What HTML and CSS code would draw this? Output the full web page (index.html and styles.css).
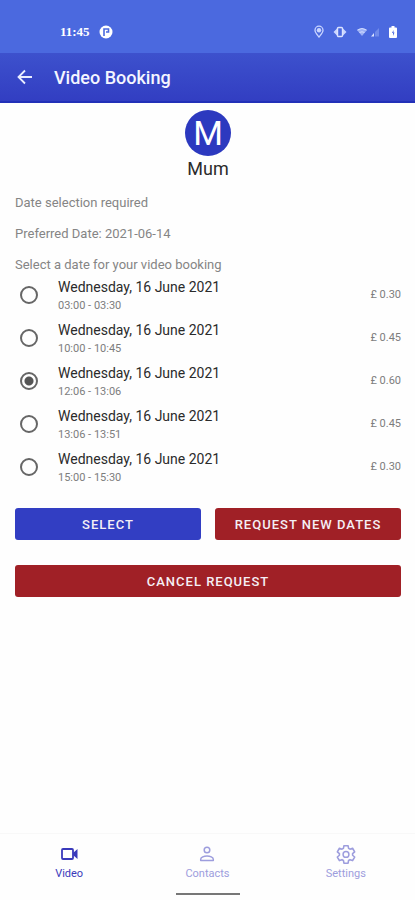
FILE: index.html
```html
<!DOCTYPE html>
<html lang="en">
<head>
<meta charset="utf-8">
<meta name="viewport" content="width=device-width, initial-scale=1">
<title>Video Booking</title>
<link rel="stylesheet" href="styles.css">
</head>
<body>
<div class="status">
  <div class="status-group">
    <span class="clock">11:45</span>
    <svg width="14" height="14" viewBox="0 0 14 14" aria-hidden="true"><circle cx="7" cy="7" r="6.5" fill="#fff"/><path d="M5 11V4H9.5V7H7" fill="none" stroke="#4b69df" stroke-width="1.6"/></svg>
  </div>
  <div class="status-group status-icons">
    <svg width="10" height="14" viewBox="0 0 10 14" aria-hidden="true"><path d="M5 12C3 9.500 1 7.500 1 5.200a4 4 0 0 1 8 0C9 7.500 7 9.500 5 12Z" fill="none" stroke="#c9d5ff" stroke-width="1.300"/><circle cx="5" cy="5.200" r="2.200" fill="#c9d5ff"/></svg>
    <svg width="14" height="14" viewBox="0 0 14 14" aria-hidden="true"><path d="M4 3.500L0.500 7l3.500 3.500ZM10 3.500L13.500 7l-3.500 3.500Z" fill="#c9d5ff"/><rect x="4.500" y="2.500" width="5" height="9" rx="1" fill="none" stroke="#dbe3ff" stroke-width="1.400"/></svg>
    <svg width="24" height="14" viewBox="0 0 24 14" aria-hidden="true"><path d="M1 5q5-4 10 0L6 11Z" fill="#9db1f5"/><path d="M1.500 5q4.500-3 9 0M3.500 7.500q2.500-1.500 5 0" fill="none" stroke="#d2dcff"/><path d="M15 11.500l3-3.500v3.500Z" fill="#dbe3ff"/><path d="M19 11.500V7l4-4v8.500Z" fill="#708aea"/></svg>
    <svg width="8" height="14" viewBox="0 0 8 14" aria-hidden="true"><path d="M2.500 1h3v1.500H7A1 1 0 0 1 8 3.500V12a1 1 0 0 1-1 1H1a1 1 0 0 1-1-1V3.500a1 1 0 0 1 1-1h1.500Z" fill="#fff"/><path d="M4.500 5L3 8h1v3l1.500-3.500h-1Z" fill="#4b69df"/></svg>
  </div>
</div>
<header class="app-bar">
  <button class="back" type="button" aria-label="Back"><svg width="16" height="16" viewBox="0 0 16 16" aria-hidden="true"><path d="M15 8H2M8 1.500L1.500 8L8 14.500" fill="none" stroke="#e9edff" stroke-width="1.800"/></svg></button>
  <h1>Video Booking</h1>
</header>
<main>
  <div class="person">
    <div class="avatar" aria-hidden="true">M</div>
    <div class="name">Mum</div>
  </div>
  <p>Date selection required</p>
  <p>Preferred Date: 2021-06-14</p>
  <form>
    <fieldset>
      <legend>Select a date for your video booking</legend>
      <label class="slot"><input type="radio" name="slot"><span class="when"><span class="day">Wednesday, 16 June 2021</span><span class="time">03:00 - 03:30</span></span><span class="price">£ 0.30</span></label>
      <label class="slot"><input type="radio" name="slot"><span class="when"><span class="day">Wednesday, 16 June 2021</span><span class="time">10:00 - 10:45</span></span><span class="price">£ 0.45</span></label>
      <label class="slot"><input type="radio" name="slot" checked><span class="when"><span class="day">Wednesday, 16 June 2021</span><span class="time">12:06 - 13:06</span></span><span class="price">£ 0.60</span></label>
      <label class="slot"><input type="radio" name="slot"><span class="when"><span class="day">Wednesday, 16 June 2021</span><span class="time">13:06 - 13:51</span></span><span class="price">£ 0.45</span></label>
      <label class="slot"><input type="radio" name="slot"><span class="when"><span class="day">Wednesday, 16 June 2021</span><span class="time">15:00 - 15:30</span></span><span class="price">£ 0.30</span></label>
    </fieldset>
    <div class="actions">
      <button class="btn" type="button">SELECT</button>
      <button class="btn danger" type="button">REQUEST NEW DATES</button>
      <button class="btn danger wide" type="button">CANCEL REQUEST</button>
    </div>
  </form>
</main>
<footer>
  <nav>
    <a class="active" href="#video"><svg width="20" height="20" viewBox="0 0 20 20" aria-hidden="true"><rect x="3" y="5" width="11" height="10" rx="1" fill="none" stroke="currentColor" stroke-width="1.800"/><path d="M14 9l4.500-4v10L14 11Z" fill="currentColor"/></svg>Video</a>
    <a href="#contacts"><svg width="20" height="20" viewBox="0 0 20 20" aria-hidden="true"><circle cx="10" cy="6" r="2.800" fill="none" stroke="currentColor" stroke-width="1.500"/><path d="M3.700 16.500v-1.200c0-2 3.300-3.300 6.300-3.300s6.300 1.300 6.300 3.300v1.200Z" fill="none" stroke="currentColor" stroke-width="1.500" stroke-linejoin="round"/></svg>Contacts</a>
    <a href="#settings"><svg width="20" height="20" viewBox="0 0 24 24" aria-hidden="true"><path d="M9.500 2h5l.6 3.200 1.700 1 3.100-1.100 2.500 4.300-2.500 2.100v2l2.500 2.100-2.500 4.300-3.100-1.100-1.700 1-.6 3.200h-5l-.6-3.200-1.700-1-3.100 1.100-2.500-4.300 2.500-2.100v-2L1.600 9.400l2.500-4.300 3.100 1.100 1.700-1Z" fill="none" stroke="currentColor" stroke-width="1.900" stroke-linejoin="round"/><circle cx="12" cy="12.500" r="3.500" fill="none" stroke="currentColor" stroke-width="1.800"/></svg>Settings</a>
  </nav>
  <div class="home-bar"></div>
</footer>
</body>
</html>
```
FILE: styles.css
```css
* { box-sizing: border-box; }

body {
  margin: 0;
  min-height: 100vh;
  display: flex;
  flex-direction: column;
  background: #fefefe;
  color: #2b2b2b;
  font-family: Roboto, sans-serif;
}

svg { display: block; }

.status {
  display: flex;
  justify-content: space-between;
  align-items: center;
  padding: 20px 18px 9px 60px;
  background: #4b69df;
  color: #fff;
}

.status-group {
  display: flex;
  align-items: center;
  gap: 9px;
}

.clock {
  font: 700 13px/24px "Liberation Serif", serif;
}

.app-bar {
  display: flex;
  align-items: center;
  gap: 21px;
  height: 50px;
  padding: 0 17px;
  background: linear-gradient(#3d51cd, #323ec2);
  border-bottom: 2px solid #2230b8;
  color: #f4f6ff;
}

.back {
  padding: 0;
  border: 0;
  background: none;
}

h1 {
  margin: 0;
  font-size: 18px;
  font-weight: 500;
}

main {
  flex: 1;
  padding: 7px 14px 0 15px;
}

.person {
  display: flex;
  flex-direction: column;
  align-items: center;
}

.avatar {
  width: 46px;
  height: 46px;
  border-radius: 50%;
  background: #2c39bf;
  color: #fff;
  font-size: 34px;
  line-height: 47px;
  text-align: center;
}

.name {
  font-size: 18px;
  line-height: 26px;
  margin-bottom: 13px;
}

p,
legend {
  margin: 0 0 15px;
  padding: 0;
  color: #858585;
  font-size: 13px;
  line-height: 16px;
}

fieldset {
  margin: 0;
  padding: 0;
  border: 0;
}

legend { margin: 0; }

.slot {
  display: flex;
  align-items: center;
  height: 43px;
}

.slot input {
  appearance: none;
  width: 18px;
  height: 18px;
  margin: 0 20px 0 5px;
  border: 2px solid #666;
  border-radius: 50%;
}

.slot input:checked {
  background: radial-gradient(circle, #555 4px, transparent 5px);
}

.when {
  flex: 1;
  display: flex;
  flex-direction: column;
  padding-top: 2px;
}

.day {
  font-size: 14px;
  line-height: 20px;
}

.time,
.price {
  color: #7d7d7d;
  font-size: 11px;
  line-height: 18px;
}

.actions {
  display: grid;
  grid-template-columns: 1fr 1fr;
  gap: 25px 14px;
  margin-top: 20px;
}

.btn {
  height: 32px;
  padding: 0;
  border: 0;
  border-radius: 3px;
  background: #323ec3;
  color: #f5eff5;
  font: 500 13px Roboto, sans-serif;
  letter-spacing: 1px;
}

.danger { background: #a02026; }

.wide { grid-column: 1 / -1; }

footer {
  border-top: 1px solid #f8f8f8;
  padding: 10px 0 5px;
}

nav {
  display: grid;
  grid-template-columns: repeat(3, 1fr);
}

nav a {
  display: flex;
  flex-direction: column;
  align-items: center;
  gap: 2px;
  color: #9d9ddd;
  font-size: 11px;
  line-height: 16px;
  text-decoration: none;
}

nav .active { color: #3a3abb; }

.home-bar {
  width: 64px;
  height: 2px;
  margin: 11px auto 0;
  background: #777;
}
```
